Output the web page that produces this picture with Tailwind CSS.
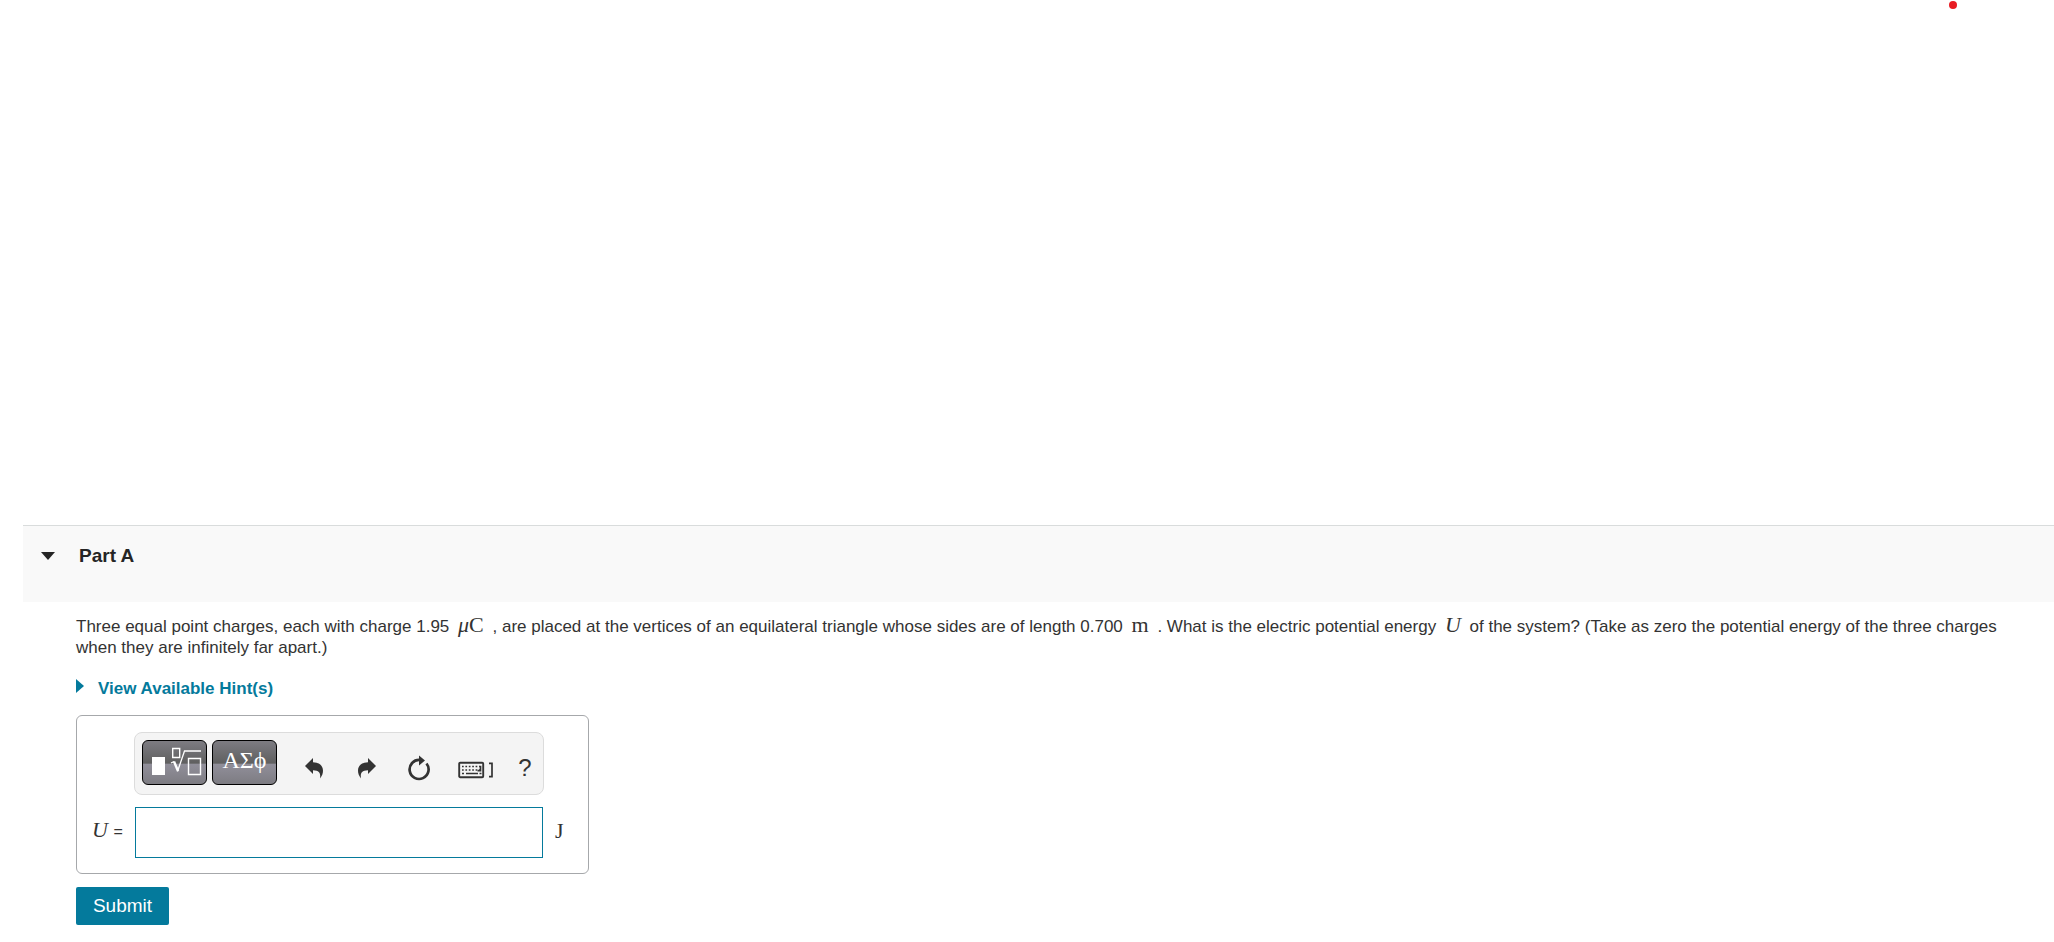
<!DOCTYPE html>
<html lang="en">
<head>
<meta charset="utf-8">
<title>Part A</title>
<script src="https://cdn.jsdelivr.net/npm/@tailwindcss/browser@4"></script>
</head>
<body class="bg-white font-['Liberation_Sans',Arial,sans-serif] text-[#333]">
<div class="flex h-[525px] justify-end pr-[97px]"><span class="mt-px size-2 rounded-full bg-[#e81c23]"></span></div>
<main class="pl-[23px]">
  <header class="h-[77px] border-t border-[#d9dcdc] bg-[#f9f9f9] pt-[18px] pl-[18px]">
    <button type="button" aria-expanded="true" class="flex items-center text-[#252525]">
      <svg class="h-2 w-[14px]" viewBox="0 0 14 8" fill="currentColor" aria-hidden="true"><path d="M0 0h14L7 8z"/></svg>
      <span class="ml-6 text-[19px] leading-6 font-bold">Part A</span>
    </button>
  </header>
  <section class="pt-[13px] pr-10 pl-[53px]">
    <p class="text-[17px] leading-[21px]">Three equal point charges, each with charge 1.95 <span class="mx-1 font-['Liberation_Serif',serif] text-[22px] leading-5"><i>μ</i>C</span> , are placed at the vertices of an equilateral triangle whose sides are of length 0.700 <span class="mx-1 font-['Liberation_Serif',serif] text-[22px] leading-5">m</span> . What is the electric potential energy <i class="mx-1 font-['Liberation_Serif',serif] text-[22px] leading-5">U</i> of the system? (Take as zero the potential energy of the three charges when they are infinitely far apart.)</p>
    <button type="button" class="mt-5 flex items-start text-[#047a9c]">
      <svg class="mt-px h-[14px] w-2" viewBox="0 0 8 14" fill="currentColor" aria-hidden="true"><path d="M0 0l8 7-8 7z"/></svg>
      <span class="ml-[14px] text-[17px] leading-[21px] font-bold">View Available Hint(s)</span>
    </button>
    <form>
      <div class="mt-4 w-[513px] rounded-md border border-[#a6a8ab] pt-4 pb-[15px]">
        <div role="toolbar" aria-label="Equation tools" class="ml-[57px] flex h-[63px] w-[410px] rounded-lg border border-[#dcdcdc] bg-[#f4f4f4] pt-[7px] pl-[7px] text-[#333]">
          <button type="button" aria-label="Templates" class="h-[45px] w-[65px] rounded-md border border-black bg-[linear-gradient(#7d7c82,#5f5f5f_52%,#918f9a_53%,#7d7c82)]">
            <svg class="size-full" viewBox="0 0 63 43" fill="none" stroke="#fff" aria-hidden="true"><path fill="#fff" stroke="none" d="M9 16h13v18H9z"/><path stroke-width="1.4" d="M29.700 7.500h7v9h-7zM45.500 17.500h12v16h-12z"/><path stroke-width="1.300" d="M28 22l3-1.500M34.500 30.500l7-20.500H58"/><path stroke-width="2.400" d="M31 20.500l4 9.500"/></svg>
          </button>
          <button type="button" aria-label="Greek letters" class="ml-[5px] h-[45px] w-[65px] rounded-md border border-black bg-[linear-gradient(#7d7c82,#5f5f5f_52%,#918f9a_53%,#7d7c82)] pb-1.5 font-['Liberation_Serif',serif] text-2xl leading-6 text-white">ΑΣϕ</button>
          <button type="button" aria-label="Undo" class="ml-[25px] flex h-[55px] w-6 items-center justify-center"><svg class="h-[22px] w-5" viewBox="0 0 20 22" fill="currentColor" aria-hidden="true"><path d="M1 9L9 1v4.300c6 .2 10 3 10 8.500 0 3-1 5-3 7.700.6-4.500.4-8-7-8.200V17z"/></svg></button>
          <button type="button" aria-label="Redo" class="ml-[29px] flex h-[55px] w-6 items-center justify-center"><svg class="h-[22px] w-5" viewBox="0 0 20 22" fill="currentColor" aria-hidden="true"><path d="M19 9l-8-8v4.300C5 5.500 1 8.300 1 13.800c0 3 1 5 3 7.700-.6-4.500-.4-8 7-8.200V17z"/></svg></button>
          <button type="button" aria-label="Reset" class="ml-7 flex h-[55px] w-6 items-center justify-center"><svg class="h-[26px] w-6" viewBox="0 0 24 26" fill="none" aria-hidden="true"><path d="M13 5A9.500 9.500 0 1 0 19.500 8.500" stroke="currentColor" stroke-width="2.700"/><path fill="currentColor" d="M12 .5l6 5-6 5z"/></svg></button>
          <button type="button" aria-label="Keyboard shortcuts" class="ml-[27px] flex h-[55px] w-9 items-center pt-1"><svg class="h-[18px] w-9" viewBox="0 0 36 18" fill="none" stroke="currentColor" aria-hidden="true"><rect x="1.200" y="1.700" width="24" height="14.500" rx="1" stroke-width="1.900"/><path stroke-width="1.700" stroke-dasharray="1.700 1.700" d="M4 5.500h18M4 9h18"/><path stroke-width="1.700" d="M4 12.500h2M8 12.500h12M21.500 12.500h2M22.500 4.800v4.900h-3"/><path stroke-width="1.700" d="M31 2.300h3v13.300h-3"/></svg></button>
          <button type="button" aria-label="Help" class="ml-6 flex h-[55px] w-[14px] items-center justify-center text-2xl leading-6">?</button>
        </div>
        <div class="mt-3 flex items-center">
          <label for="answer" class="w-[58px] pb-1 pl-[15px] font-['Liberation_Serif',serif] text-[22px] leading-6 whitespace-nowrap"><i>U</i> <span class="font-['Liberation_Sans',sans-serif] text-base">=</span></label>
          <input id="answer" type="text" class="h-[51px] w-[408px] border border-[#047a9c] bg-white px-2 text-lg outline-none">
          <span class="ml-3 pb-1 font-['Liberation_Serif',serif] text-[22px] leading-6">J</span>
        </div>
      </div>
      <button type="button" class="mt-[13px] block h-[38px] w-[93px] rounded-xs bg-[#047a9c] text-[19px] leading-6 text-white">Submit</button>
    </form>
  </section>
</main>
</body>
</html>
